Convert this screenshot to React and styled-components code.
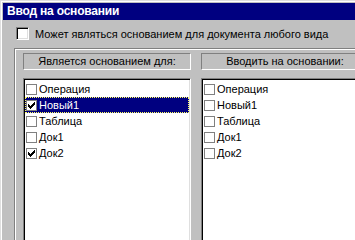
import styled, { createGlobalStyle } from 'styled-components';

const GlobalStyle = createGlobalStyle`
  html, body {
    margin: 0;
    padding: 0;
    height: 100%;
    overflow: hidden;
    background: #c0c0c0;
  }
  * {
    box-sizing: border-box;
  }
`;

const Window = styled.div`
  height: 100vh;
  display: flex;
  flex-direction: column;
  padding: 2px 0 0 2px;
  background: #c0c0c0;
  border-top: 1px solid #dfdfdf;
  border-left: 1px solid #dfdfdf;
  box-shadow: inset 1px 1px #fff;
  font-family: 'Liberation Sans', Arial, sans-serif;
  font-size: 11px;
  color: #000;
  overflow: hidden;
`;

const TitleBar = styled.div`
  height: 17px;
  flex-shrink: 0;
  padding-left: 4px;
  background: #000080;
  color: #fff;
  font-size: 12px;
  font-weight: bold;
  line-height: 17px;
  letter-spacing: -0.2px;
  white-space: nowrap;
`;

const OptionRow = styled.label`
  display: flex;
  align-items: center;
  gap: 6px;
  height: 13px;
  flex-shrink: 0;
  margin: 7px 0 0 13px;
  white-space: nowrap;
`;

const BigBox = styled.span`
  width: 13px;
  height: 13px;
  flex-shrink: 0;
  background: #fff;
  border-top: 1px solid #808080;
  border-left: 1px solid #808080;
  border-bottom: 1px solid #fff;
  border-right: 1px solid #fff;
  box-shadow: inset 1px 1px #000, inset -1px -1px #dfdfdf;
`;

const GroupFrame = styled.div`
  flex: 1;
  min-height: 0;
  margin: 8px 0 0 11px;
  padding: 4px 0 0 8px;
  border-top: 1px solid #808080;
  border-left: 1px solid #808080;
  box-shadow: inset 1px 1px #fff;
  overflow: hidden;
`;

const Columns = styled.div`
  display: grid;
  grid-template-columns: 168px 168px;
  column-gap: 10px;
  height: calc(100% + 20px);
`;

const Column = styled.div`
  display: flex;
  flex-direction: column;
  gap: 8px;
  min-height: 0;
`;

const ColumnHeader = styled.div`
  height: 17px;
  flex-shrink: 0;
  border-top: 1px solid #808080;
  border-left: 1px solid #808080;
  border-bottom: 1px solid #fff;
  border-right: 1px solid #fff;
  text-align: center;
  line-height: 15px;
  white-space: nowrap;
`;

const List = styled.div`
  flex: 1;
  padding: 2px 1px 0;
  background: #fff;
  border-top: 1px solid #808080;
  border-left: 1px solid #808080;
  border-bottom: 1px solid #fff;
  border-right: 1px solid #fff;
  box-shadow: inset 1px 1px #000, inset -1px -1px #dfdfdf;
`;

const Item = styled.div`
  display: flex;
  align-items: center;
  height: 16px;
  padding-left: 1px;
  white-space: nowrap;
  background: ${(p) => (p.$selected ? '#000080' : 'transparent')};
  color: ${(p) => (p.$selected ? '#fff' : '#000')};
  outline: ${(p) => (p.$selected ? '1px dotted #ffff60' : 'none')};
  outline-offset: -1px;
`;

const SmallBox = styled.span`
  display: flex;
  align-items: center;
  justify-content: center;
  width: 11px;
  height: 11px;
  flex-shrink: 0;
  margin-right: 2px;
  background: #fff;
  border: 1px solid #808080;
`;

const checkPixels = [
  '......X',
  '.....XX',
  'X...XXX',
  'XX.XXX.',
  'XXXXX..',
  '.XXX...',
  '..X....',
];

const CheckMark = () => (
  <svg width="7" height="7" viewBox="0 0 7 7" shapeRendering="crispEdges">
    {checkPixels.map((row, y) =>
      row.split('').map((c, x) =>
        c === 'X' ? <rect key={`${x}-${y}`} x={x} y={y} width="1" height="1" fill="#000" /> : null
      )
    )}
  </svg>
);

const leftItems = [
  { name: 'Операция', checked: false },
  { name: 'Новый1', checked: true, selected: true },
  { name: 'Таблица', checked: false },
  { name: 'Док1', checked: false },
  { name: 'Док2', checked: true },
];

const rightItems = [
  { name: 'Операция' },
  { name: 'Новый1' },
  { name: 'Таблица' },
  { name: 'Док1' },
  { name: 'Док2' },
];

const CheckList = ({ items }) => (
  <List>
    {items.map((item) => (
      <Item key={item.name} $selected={item.selected}>
        <SmallBox>{item.checked && <CheckMark />}</SmallBox>
        {item.name}
      </Item>
    ))}
  </List>
);

const App = () => (
  <>
    <GlobalStyle />
    <Window>
      <TitleBar>Ввод на основании</TitleBar>
      <OptionRow>
        <BigBox />
        Может являться основанием для документа любого вида
      </OptionRow>
      <GroupFrame>
        <Columns>
          <Column>
            <ColumnHeader>Является основанием для:</ColumnHeader>
            <CheckList items={leftItems} />
          </Column>
          <Column>
            <ColumnHeader>Вводить на основании:</ColumnHeader>
            <CheckList items={rightItems} />
          </Column>
        </Columns>
      </GroupFrame>
    </Window>
  </>
);

export default App;
